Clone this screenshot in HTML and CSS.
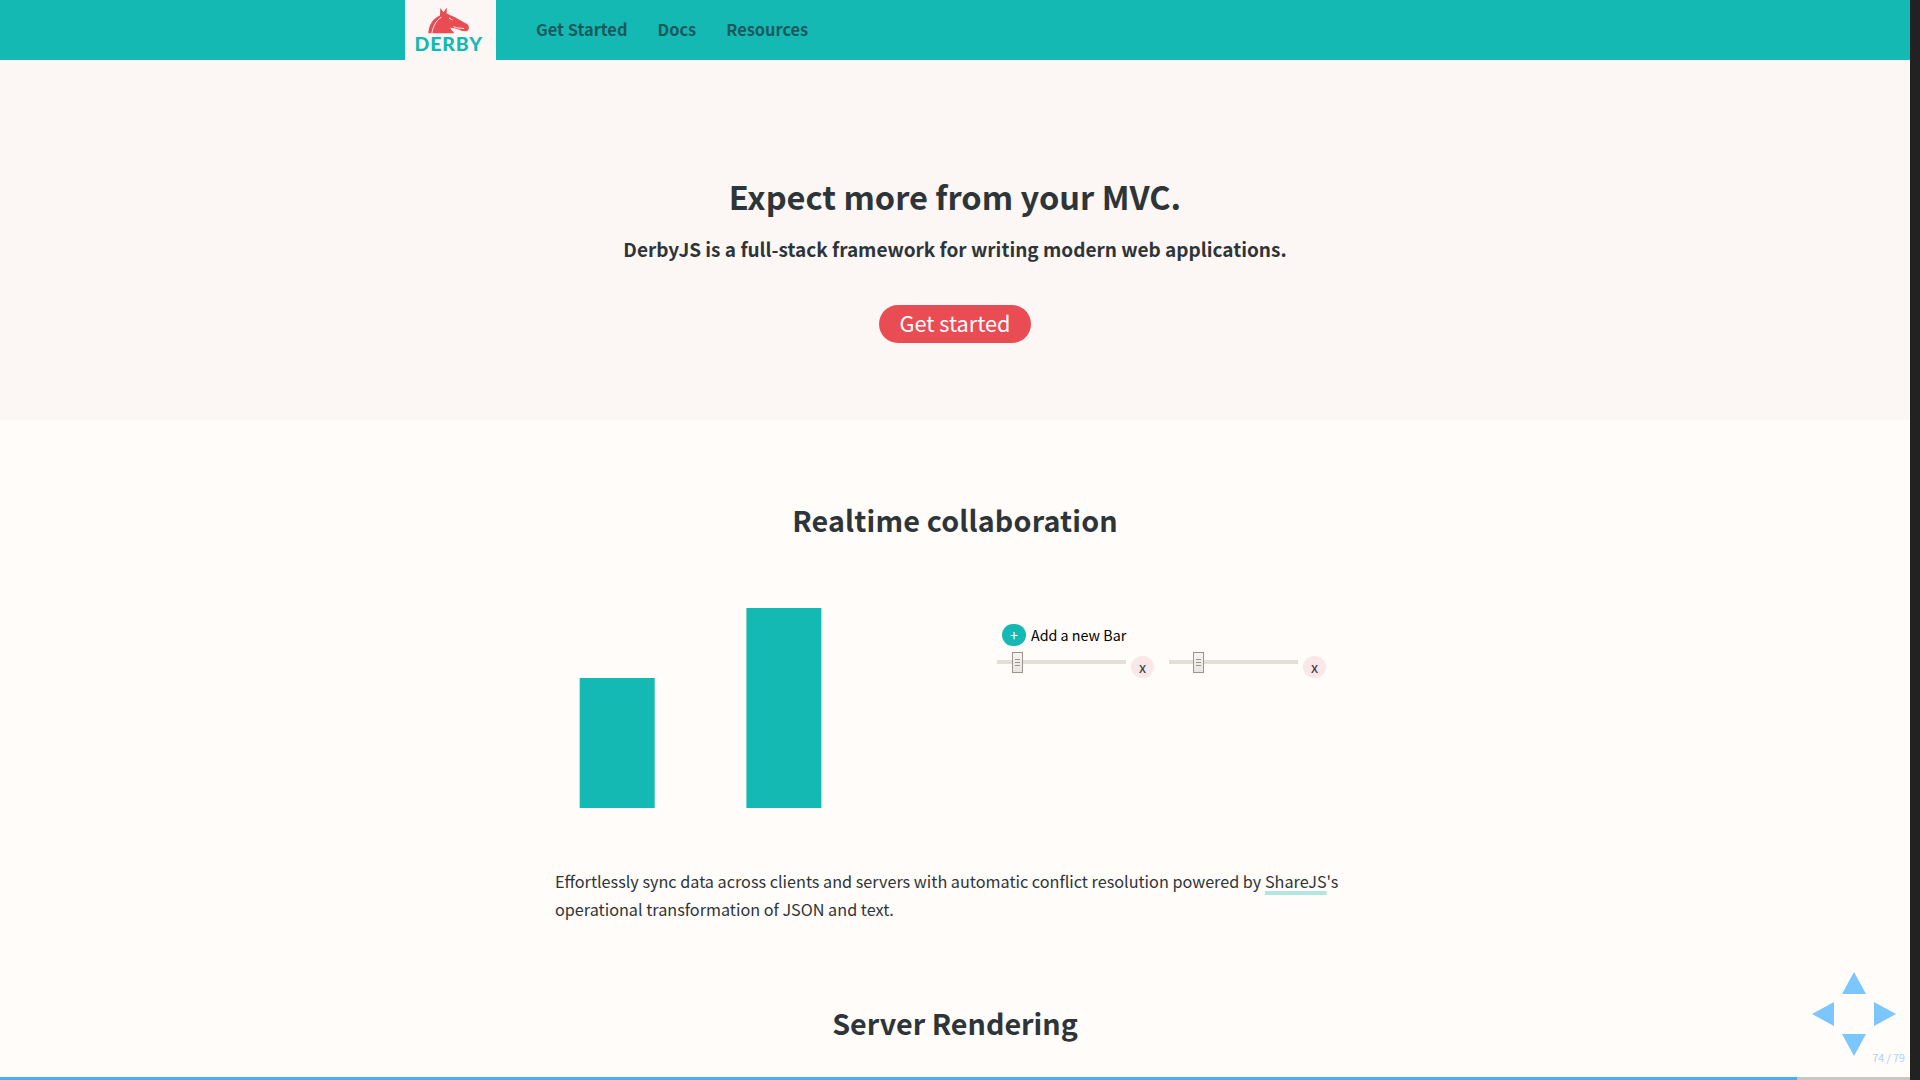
FILE: index.html
```html
<!DOCTYPE html>
<html lang="en">
<head>
<meta charset="utf-8">
<title>DerbyJS</title>
<link rel="stylesheet" href="styles.css">
</head>
<body>
<div class="slide">
  <header class="topbar">
    <div class="topbar-inner">
      <a class="logo">
        <svg width="91" height="60" viewBox="0 0 91 60" role="img" aria-label="Derby">
          <path class="horse" d="M23.300 33.200 C24 25 27.500 18.500 35 15.500 L35.300 8 L38.500 12.300 L41.700 7.600 L41.700 13.500 C45 15.500 49 16.500 53 19 L62 24 C64.800 26 64.500 30.500 61.500 31.300 L57 31 C54 28.800 49.500 28.800 45.500 27.800 C45.500 30 48 31 49.300 33.200 Z"/>
          <path class="mane" d="M26.800 33.500 C28 26.500 31 20.500 36.500 17 M44 18 L47.500 20 M48.500 26.500 C52 29 56 27.500 59 28.700"/>
          <text class="wordmark" x="9.500" y="50.700" textLength="67.500" lengthAdjust="spacing">DERBY</text>
        </svg>
      </a>
      <nav class="nav">
        <a>Get Started</a>
        <a>Docs</a>
        <a>Resources</a>
      </nav>
    </div>
  </header>

  <section class="hero">
    <h1>Expect more from your MVC.</h1>
    <p class="tagline">DerbyJS is a full-stack framework for writing modern web applications.</p>
    <a class="cta">Get started</a>
  </section>

  <main class="content">
    <h2 class="wide">Realtime collaboration</h2>
    <div class="demo">
      <svg class="chart" width="442" height="200" viewBox="0 0 442 200">
        <rect x="24.700" y="70" width="75" height="130"/>
        <rect x="191.400" y="0" width="75" height="200"/>
      </svg>
      <div class="controls">
        <div class="add"><span class="add-btn">+</span><span>Add a new Bar</span></div>
        <div class="sliders">
          <div class="slider"><div class="track"><div class="thumb" style="left:15px"><i></i><i></i><i></i></div></div><span class="remove">x</span></div>
          <div class="slider"><div class="track"><div class="thumb" style="left:24px"><i></i><i></i><i></i></div></div><span class="remove">x</span></div>
        </div>
      </div>
    </div>
    <p class="copy">Effortlessly sync data across clients and servers with automatic conflict resolution powered by <a class="link">ShareJS</a>'s<br>operational transformation of JSON and text.</p>
    <h2>Server Rendering</h2>
  </main>
</div>

<svg class="arrows" width="84" height="84" viewBox="0 0 84 84">
  <path d="M42 0 L54 22 H30 Z M0 42 L22 30 V54 Z M84 42 L62 30 V54 Z M42 84 L54 62 H30 Z"/>
</svg>
<div class="page-number">74 / 79</div>
<div class="progress"><div class="progress-fill"></div></div>
</body>
</html>
```

FILE: styles.css
```css
* {
  box-sizing: border-box;
}

body {
  margin: 0;
  height: 1080px;
  overflow: hidden;
  background: #222;
  color: #2e3539;
  font-family: "Noto Sans CJK SC", "Noto Sans", sans-serif;
}

.slide {
  width: 1910px;
  height: 1080px;
  overflow: hidden;
  background: #fffcf9;
}

.topbar {
  height: 60px;
  background: #14b9b3;
}

.topbar-inner {
  display: flex;
  width: 1100px;
  margin: 0 auto;
}

.logo {
  width: 91px;
  height: 60px;
  background: #fcf7f4;
}

.logo svg {
  display: block;
}

.horse {
  fill: #ea4c54;
}

.mane {
  fill: none;
  stroke: #fcf7f4;
  stroke-width: 0.9;
}

.wordmark {
  font: 900 19.5px Lato, sans-serif;
  fill: #14b9b3;
}

.nav {
  display: flex;
  gap: 30px;
  margin-left: 40px;
  line-height: 58px;
  font-size: 16.4px;
  font-weight: 700;
  color: #1a5a5c;
}

.hero {
  display: flex;
  flex-direction: column;
  align-items: center;
  height: 360px;
  padding-top: 111px;
  background: #fcf7f4;
}

h1,
h2,
p {
  margin: 0;
}

h1 {
  font-size: 32.6px;
  line-height: 50px;
}

.tagline {
  margin-top: 13px;
  font-size: 19px;
  font-weight: 700;
  line-height: 30px;
}

.cta {
  width: 152px;
  height: 38px;
  margin-top: 41px;
  border-radius: 19px;
  background: #ea4c54;
  color: #fff;
  font-size: 21.7px;
  line-height: 36px;
  text-align: center;
}

.content {
  width: 800px;
  margin: 0 auto;
  padding-top: 80px;
}

h2 {
  font-size: 28.7px;
  line-height: 40px;
  text-align: center;
}

.wide {
  letter-spacing: 0.17px;
}

.demo {
  display: flex;
  height: 200px;
  margin-top: 68px;
}

.chart {
  fill: #14b9b3;
}

.controls {
  padding-top: 16px;
}

.add {
  display: flex;
  gap: 5px;
  padding-left: 5px;
  color: #000;
  font-size: 14.3px;
  line-height: 22px;
}

.add-btn {
  width: 24px;
  height: 22px;
  border-radius: 11px;
  background: #14b9b3;
  color: #fff;
  font-size: 14.3px;
  line-height: 22px;
  text-align: center;
}

.sliders {
  display: flex;
  gap: 15px;
  padding-top: 10px;
}

.slider {
  display: flex;
  gap: 5px;
}

.track {
  position: relative;
  width: 129px;
  height: 4px;
  margin-top: 4px;
  background: #e2dfd8;
}

.thumb {
  position: absolute;
  top: -8px;
  display: flex;
  flex-direction: column;
  align-items: center;
  justify-content: center;
  gap: 2px;
  width: 11px;
  height: 21px;
  border: 1px solid #9c948c;
  background: linear-gradient(#f6f4f2, #e8e5e2);
}

.thumb i {
  width: 5px;
  height: 1px;
  background: #9c948c;
}

.remove {
  width: 23px;
  height: 22px;
  border-radius: 11px;
  background: #fae8e9;
  font-size: 14.3px;
  line-height: 22px;
  text-align: center;
}

.copy {
  margin: 59px 0 80px;
  font-size: 16.22px;
  line-height: 28px;
  white-space: nowrap;
}

.link {
  text-decoration: underline #b1e7e1 4px;
  text-underline-offset: 3px;
  text-decoration-skip-ink: none;
}

.arrows {
  position: absolute;
  left: 1812px;
  top: 972px;
  fill: #7bc6fc;
}

.page-number {
  position: absolute;
  right: 15px;
  top: 1048px;
  color: #a6d3f7;
  font-size: 10.7px;
  line-height: 20px;
}

.progress {
  position: absolute;
  left: 0;
  bottom: 0;
  width: 1910px;
  height: 3px;
  background: #c9c6c3;
}

.progress-fill {
  width: 1797px;
  height: 3px;
  background: #44aefb;
}
```
